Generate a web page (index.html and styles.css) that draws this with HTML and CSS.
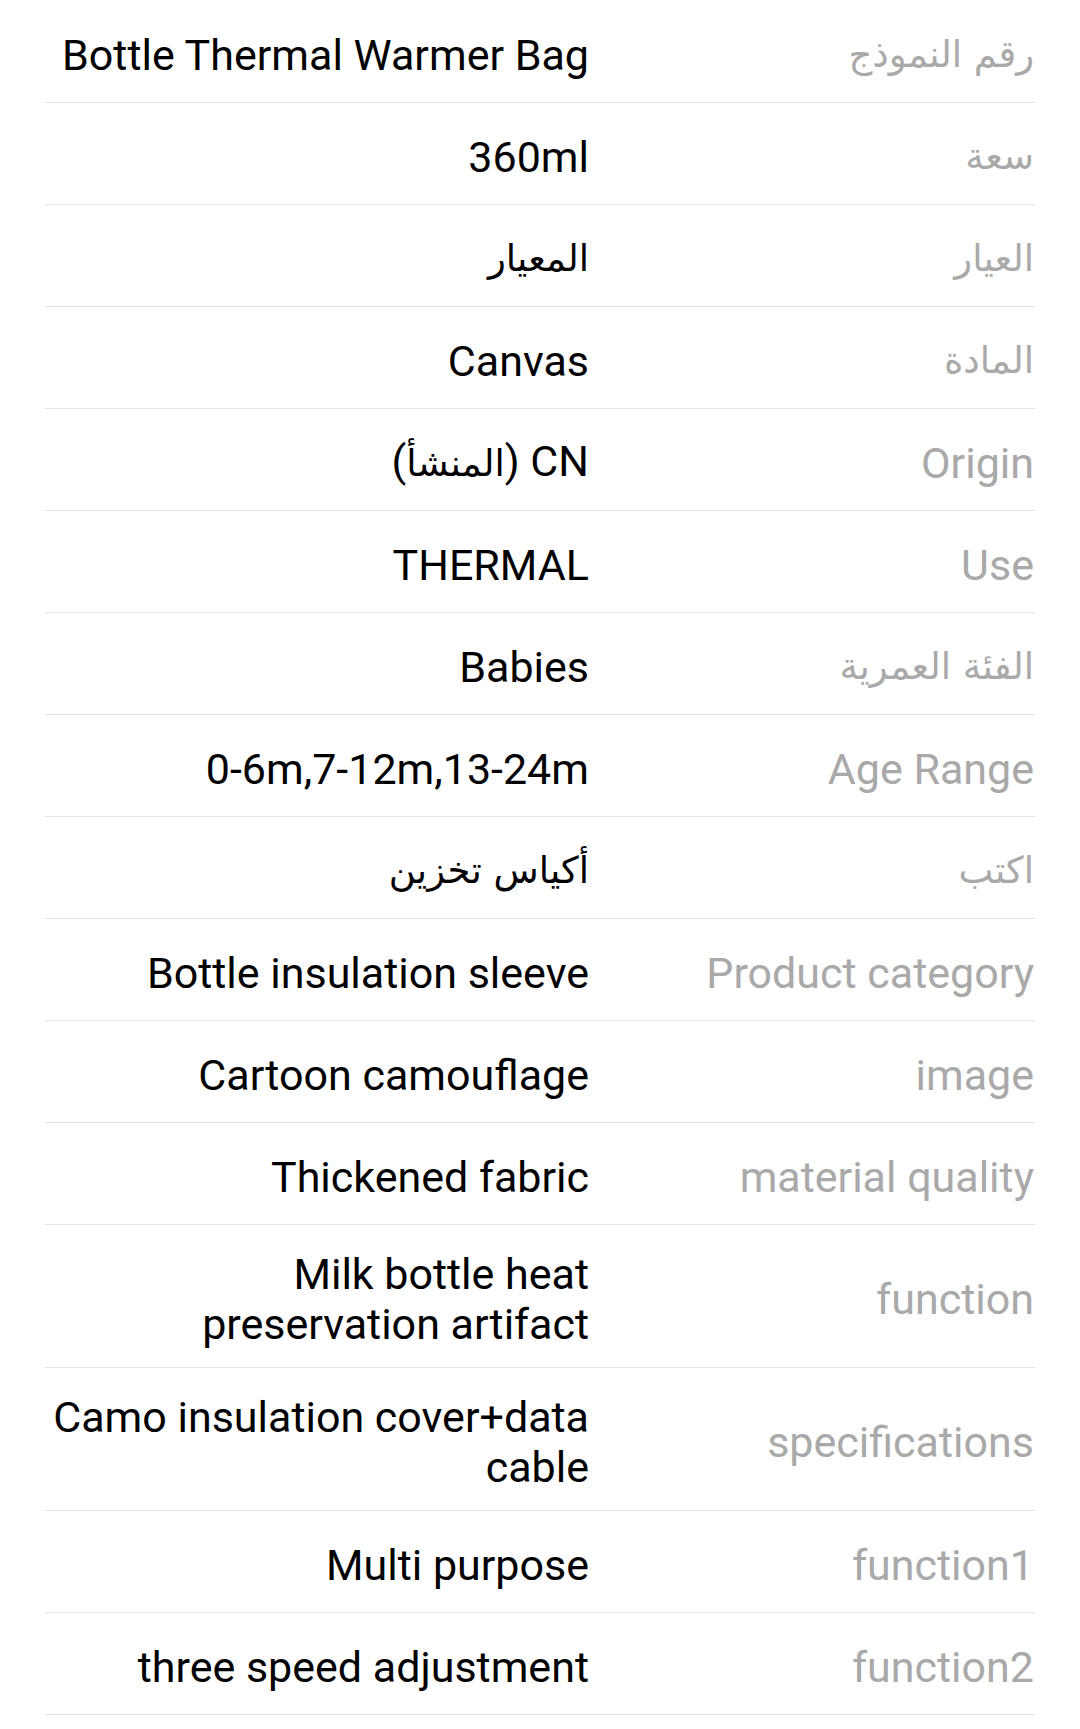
FILE: index.html
```html
<!DOCTYPE html>
<html lang="ar" dir="rtl">
<head>
    <meta charset="UTF-8">
    <meta name="viewport" content="width=device-width, initial-scale=1.0">
    <title>Product Specs</title>
    <link rel="stylesheet" href="styles.css">
</head>
<body>
    <div class="specs">
        <div class="spec-row"><div class="spec-label"><span class="ar">رقم النموذج</span></div><div class="spec-value">Bottle Thermal Warmer Bag</div></div>
        <div class="spec-row"><div class="spec-label"><span class="ar">سعة</span></div><div class="spec-value">360ml</div></div>
        <div class="spec-row"><div class="spec-label"><span class="ar">العيار</span></div><div class="spec-value"><span class="ar">المعيار</span></div></div>
        <div class="spec-row"><div class="spec-label"><span class="ar">المادة</span></div><div class="spec-value">Canvas</div></div>
        <div class="spec-row"><div class="spec-label">Origin</div><div class="spec-value"><span>CN (<span class="ar">المنشأ</span>)</span></div></div>
        <div class="spec-row"><div class="spec-label">Use</div><div class="spec-value">THERMAL</div></div>
        <div class="spec-row"><div class="spec-label"><span class="ar">الفئة العمرية</span></div><div class="spec-value">Babies</div></div>
        <div class="spec-row"><div class="spec-label">Age Range</div><div class="spec-value">0-6m,7-12m,13-24m</div></div>
        <div class="spec-row"><div class="spec-label"><span class="ar">اكتب</span></div><div class="spec-value"><span class="ar">أكياس تخزين</span></div></div>
        <div class="spec-row"><div class="spec-label">Product category</div><div class="spec-value">Bottle insulation sleeve</div></div>
        <div class="spec-row"><div class="spec-label">image</div><div class="spec-value">Cartoon camouflage</div></div>
        <div class="spec-row"><div class="spec-label">material quality</div><div class="spec-value">Thickened fabric</div></div>
        <div class="spec-row"><div class="spec-label">function</div><div class="spec-value">Milk bottle heat preservation artifact</div></div>
        <div class="spec-row"><div class="spec-label">specifications</div><div class="spec-value">Camo insulation cover+data cable</div></div>
        <div class="spec-row"><div class="spec-label">function1</div><div class="spec-value">Multi purpose</div></div>
        <div class="spec-row"><div class="spec-label">function2</div><div class="spec-value">three speed adjustment</div></div>
    </div>
</body>
</html>
```

FILE: styles.css
```css
body {
    margin: 0;
    padding-top: 1px;
    background: #fff;
    font-family: Roboto, "DejaVu Sans", sans-serif;
    font-size: 43px;
    line-height: 50px;
}
.specs {
    margin: 0 45px;
}
.spec-row {
    display: grid;
    grid-template-columns: 1fr 544px;
    padding: 24px 0 18px;
    border-bottom: 1px solid #e2e2e2;
}
.spec-label,
.spec-value {
    display: flex;
    align-items: center;
    min-height: 59px;
    text-align: right;
}
.spec-label {
    color: #a9a9a9;
    padding-right: 1px;
}
.spec-value {
    color: #000;
    padding-left: 6px;
}
.ar {
    font-family: "DejaVu Sans", sans-serif;
    font-size: 37px;
}
```
